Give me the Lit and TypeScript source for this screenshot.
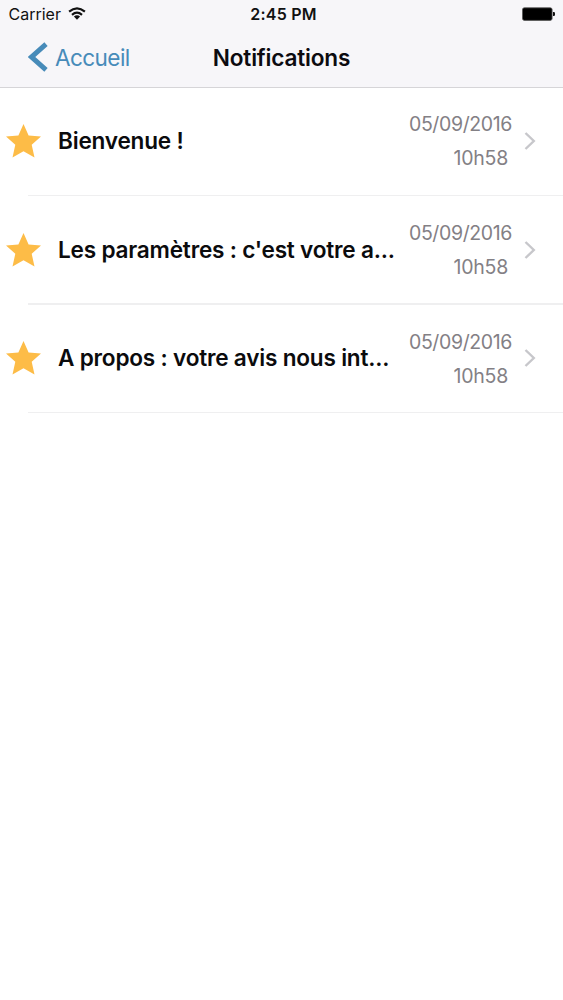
import { LitElement, html, css } from "lit";
import { customElement, property } from "lit/decorators.js";

interface Notice {
  title: string;
  date: string;
  time: string;
}

const notices: Notice[] = [
  { title: "Bienvenue !", date: "05/09/2016", time: "10h58" },
  { title: "Les paramètres : c'est votre a...", date: "05/09/2016", time: "10h58" },
  { title: "A propos : votre avis nous int...", date: "05/09/2016", time: "10h58" },
];

@customElement("status-bar")
class StatusBar extends LitElement {
  static styles = css`
    :host {
      display: grid;
      grid-template-columns: 1fr auto 1fr;
      align-items: center;
      height: 28px;
      padding: 0 8px 0 9px;
      color: #111;
      font-size: 16px;
      line-height: 28px;
    }
    .carrier {
      display: flex;
      align-items: center;
      gap: 7px;
    }
    .name {
      margin-left: -0.5px;
      letter-spacing: 0;
    }
    .clock {
      padding-left: 3px;
      font-weight: 600;
      letter-spacing: 0.2px;
    }
    .battery {
      justify-self: end;
    }
    svg {
      display: block;
    }
  `;
  render() {
    return html`
      <div class="carrier">
        <span class="name">Carrier</span>
        <svg width="18" height="14" viewBox="0 0 18 14" fill="none" stroke="#111" stroke-width="2.2">
          <path d="M1.1 4.6Q9 -2 16.9 4.6" />
          <path d="M4 7.8Q9 3.5 14 7.8" />
          <path d="M9 12.8L5.9 9.5Q9 7 12.1 9.5Z" fill="#111" stroke="none" />
        </svg>
      </div>
      <span class="clock">2:45 PM</span>
      <svg class="battery" width="33" height="14" viewBox="0 0 33 14">
        <rect x="0.5" y="0.8" width="29.6" height="12.6" rx="1.8" fill="#000" stroke="#555" stroke-width="0.8" />
        <path d="M31 5H31.8Q33 5 33 6.2V7.8Q33 9 31.8 9H31Z" fill="#111" />
      </svg>
    `;
  }
}

@customElement("nav-bar")
class NavBar extends LitElement {
  static styles = css`
    :host {
      display: grid;
      grid-template-columns: 1fr auto 1fr;
      height: 59px;
      padding: 0 28px;
      line-height: 59px;
    }
    .back {
      display: flex;
      align-items: center;
      gap: 7px;
      color: #478bb9;
      font-size: 22.6px;
      letter-spacing: -0.6px;
    }
    .title {
      font-size: 22.6px;
      font-weight: 600;
      letter-spacing: -0.2px;
      color: #0c0b10;
    }
    svg {
      display: block;
      margin-top: -1px;
    }
  `;
  render() {
    return html`
      <div class="back">
        <svg width="20" height="30" viewBox="0 0 20 30" fill="none" stroke="#478bb9" stroke-width="5">
          <path d="M18 2.2L3.4 15L18 27.8" />
        </svg>
        <span class="label">Accueil</span>
      </div>
      <div class="title">Notifications</div>
    `;
  }
}

@customElement("notice-row")
class NoticeRow extends LitElement {
  static styles = css`
    :host {
      display: flex;
      align-items: center;
      height: 107.2px;
      padding: 0 27px 0 6px;
    }
    svg {
      display: block;
      flex: none;
    }
    .title {
      flex: 1;
      margin-left: 17px;
      white-space: nowrap;
      font-size: 22.6px;
      font-weight: 600;
      letter-spacing: -0.21px;
      line-height: 34px;
      color: #0b0b0d;
    }
    .when {
      display: flex;
      flex-direction: column;
      align-items: flex-end;
      margin-right: 12px;
      padding-top: 0.8px;
      font-size: 19.5px;
      line-height: 34px;
      letter-spacing: -0.38px;
      color: #838085;
    }
    .time {
      margin-right: 4px;
      letter-spacing: -0.25px;
    }
  `;
  @property({ attribute: false }) notice!: Notice;
  render() {
    return html`
      <svg width="35" height="34" viewBox="0 0 35 34">
        <path fill="#fdbc47" d="M17.5 0L22.6 11.4L35 12.4L25.7 20.8L28.5 33.5L17.5 27.2L6.5 33.5L9.3 20.8L0 12.4L12.4 11.4Z" />
      </svg>
      <span class="title">${this.notice.title}</span>
      <div class="when">
        <span class="date">${this.notice.date}</span>
        <span class="time">${this.notice.time}</span>
      </div>
      <svg width="12" height="18" viewBox="0 0 12 18" fill="none" stroke="#c7c7cb" stroke-width="2.4">
        <path d="M1.5 1L9.8 9L1.5 17" />
      </svg>
    `;
  }
}

@customElement("app-root")
class AppRoot extends LitElement {
  static styles = css`
    :host {
      display: block;
      height: 1000px;
      overflow: hidden;
      background: #fff;
      font-family: Inter, "Liberation Sans", sans-serif;
    }
    .header {
      background: #f7f6f9;
      border-bottom: 1px solid #d6d5d8;
    }
    .list {
      margin-top: -0.7px;
    }
    .divider {
      height: 1.5px;
      margin-left: 28px;
      background: #efeff0;
    }
  `;
  render() {
    return html`
      <div class="header">
        <status-bar></status-bar>
        <nav-bar></nav-bar>
      </div>
      <div class="list">
        ${notices.map(
          (n) => html`<notice-row .notice=${n}></notice-row>
            <div class="divider"></div>`
        )}
      </div>
    `;
  }
}
